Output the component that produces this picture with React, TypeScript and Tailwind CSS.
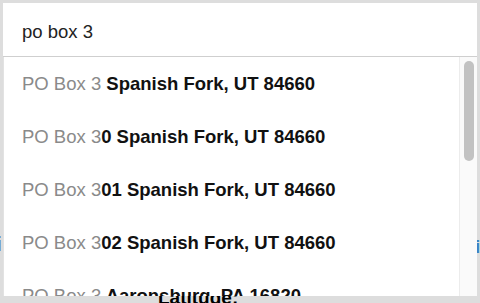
import React from "react";

const items = [
  { typed: "PO Box 3", rest: " Spanish Fork, UT 84660" },
  { typed: "PO Box 3", rest: "0 Spanish Fork, UT 84660" },
  { typed: "PO Box 3", rest: "01 Spanish Fork, UT 84660" },
  { typed: "PO Box 3", rest: "02 Spanish Fork, UT 84660" },
  { typed: "PO Box 3", rest: " Aaronsburg, PA 16820" },
];

export default function App() {
  return (
    <div
      className="relative w-[480px] h-[303px] overflow-hidden bg-[#dddddd] pt-[3px] px-[3px]"
      style={{ fontFamily: '"Liberation Sans", Arial, sans-serif' }}
    >
      {/* background content peeking out */}
      <span className="absolute left-[-4px] top-[234px] text-[20px] font-bold text-black leading-none">i</span>
      <span className="absolute left-[475px] top-[237px] text-[19px] font-bold text-[#3b82c4] leading-none">i</span>
      <span className="absolute left-[158px] top-[288px] text-[19px] font-bold text-black leading-none">Latitude:</span>

      <div className="relative z-10 flex flex-col">
        <div className="h-[54px] bg-white border-b border-[#cfcfcf] flex items-center pl-[19px] pt-[5px] text-[18.5px] text-[#222]">
          po box 3
        </div>
        <div className="relative h-[239px] bg-white overflow-hidden border-l border-[#e2e2e2]">
          <div className="flex flex-col">
            {items.map((it, i) => (
              <div key={i} className="h-[53px] shrink-0 flex items-center pl-[18px] pt-[1px] text-[18.5px] whitespace-pre">
                <span className="text-[#8a8a8a]">{it.typed}</span>
                <span className="font-bold text-[#111]">{it.rest}</span>
              </div>
            ))}
          </div>
          <div className="absolute right-0 top-0 bottom-0 w-[18px] bg-[#fafafa] border-l border-[#ececec] flex justify-center pt-[4px]">
            <div className="w-[10px] h-[100px] rounded-full bg-[#c2c2c2]" />
          </div>
        </div>
      </div>
    </div>
  );
}
